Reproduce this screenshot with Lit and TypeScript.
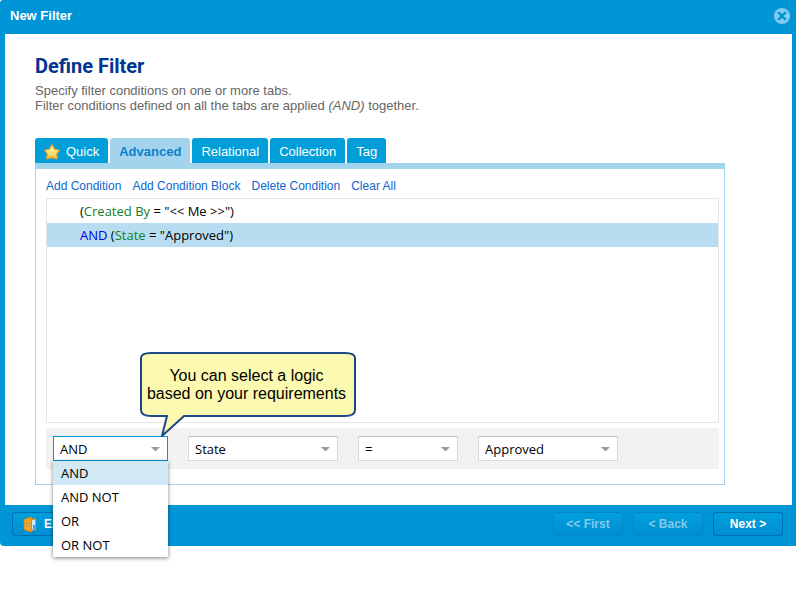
import { LitElement, html, css } from "lit";
import { customElement, property, state } from "lit/decorators.js";
import { classMap } from "lit/directives/class-map.js";

const starIcon = html`<svg class="star" viewBox="0 0 17 17" width="17" height="17" aria-hidden="true">
  <defs>
    <linearGradient id="starFill" x1="0" y1="0" x2="0" y2="1">
      <stop offset="0" stop-color="#fff3a0" />
      <stop offset="0.55" stop-color="#fee27a" />
      <stop offset="1" stop-color="#fbbd2c" />
    </linearGradient>
  </defs>
  <path d="M8 1.6 L10.7 6.2 L15.7 7.2 L12.7 10.8 L13.3 16 L8 14.6 L2.7 16 L3.3 10.8 L0.5 7.2 L5.3 6.2 Z"
    fill="url(#starFill)" stroke="#e79c2c" stroke-width="1.1" stroke-linejoin="round" />
</svg>`;

const doorIcon = html`<svg class="door" viewBox="0 0 14 17" width="14" height="17" aria-hidden="true">
  <path d="M8 2.5H12.2Q13 2.5 13 3.5V13.5Q13 14.5 12.2 14.5H8Z" fill="#e9951a" />
  <path d="M9 4H12V13.5H9Z" fill="#d3e9f7" />
  <path d="M10 9H12V13.5H10Z" fill="#3f9ddb" />
  <path d="M1 3.5 L8.5 0.8 V16.2 L1 13.6 Z" fill="#f0a41f" stroke="#d9860f" stroke-width="0.8" />
  <circle cx="5" cy="8.7" r="1.7" fill="#c9c3b0" stroke="#8b7b50" stroke-width="0.6" />
</svg>`;

const closeIcon = html`<svg viewBox="0 0 16 16" width="16" height="16" aria-hidden="true">
  <circle cx="8" cy="8" r="8" fill="#84cbed" />
  <path d="M4.2 4.2 L11.8 11.8 M11.8 4.2 L4.2 11.8" stroke="#0095d6" stroke-width="2.4" />
</svg>`;

@customElement("filter-select")
export class FilterSelect extends LitElement {
  @property() label = "";
  @property() value = "";
  @property({ type: Array }) options: string[] = [];
  @property({ type: Boolean, reflect: true }) open = false;

  static styles = css`
    :host {
      display: block;
      position: relative;
      font: 13px/24px "Open Sans", sans-serif;
    }
    .field {
      position: relative;
    }
    select {
      display: block;
      width: 100%;
      height: 25px;
      margin: 0;
      padding: 0 24px 0 6px;
      appearance: none;
      border: 1px solid #d9d9d9;
      border-top-color: #c0c0c0;
      border-radius: 0;
      background: #fff;
      color: #000;
      font: inherit;
      outline: none;
    }
    :host([open]) select {
      border-color: #0095d6;
    }
    .arrow {
      position: absolute;
      top: 11px;
      right: 8px;
      pointer-events: none;
    }
    ul {
      position: absolute;
      z-index: 2;
      top: 100%;
      left: 0;
      right: 0;
      margin: 0;
      padding: 0;
      list-style: none;
      background: #fff;
      box-shadow: 0 1px 4px rgba(0, 0, 0, 0.5);
    }
    li {
      padding: 0 8px;
      line-height: 24px;
    }
    li.current {
      background: #d1e9f5;
    }
  `;

  render() {
    return html`
      <div class="field">
        <select aria-label=${this.label}>
          ${this.options.map(
            (o) => html`<option ?selected=${o === this.value}>${o}</option>`
          )}
        </select>
        <svg class="arrow" viewBox="0 0 9 5" width="9" height="5" aria-hidden="true">
          <path d="M0 0H9L5 4H4Z" fill="#999" />
        </svg>
      </div>
      ${this.open
        ? html`<ul role="listbox" aria-label=${this.label}>
            ${this.options.map(
              (o) => html`<li
                role="option"
                aria-selected=${o === this.value}
                class=${classMap({ current: o === this.value })}
              >${o}</li>`
            )}
          </ul>`
        : null}
    `;
  }
}

@customElement("app-root")
export class AppRoot extends LitElement {
  @state() private tab = "Advanced";
  @state() private row = 1;

  private tabs = ["Quick", "Advanced", "Relational", "Collection", "Tag"];
  private actions = ["Add Condition", "Add Condition Block", "Delete Condition", "Clear All"];
  private conditions = [
    { logic: "", field: "Created By", value: '"<< Me >>"' },
    { logic: "AND", field: "State", value: '"Approved"' },
  ];

  static styles = css`
    :host {
      display: block;
      min-height: 100vh;
      background: #fff;
      font: 13px/15px "Liberation Sans", Arial, sans-serif;
      color: #000;
    }
    * {
      box-sizing: border-box;
    }
    button {
      font: inherit;
      margin: 0;
      cursor: pointer;
    }
    .dialog {
      background: #0095d6;
      border-radius: 3px 0 0 4px;
    }
    .title {
      display: flex;
      align-items: flex-start;
      justify-content: space-between;
      height: 34px;
      padding: 8px 6px 0 10px;
      color: #fff;
      font-weight: bold;
    }
    .title h1 {
      margin: 0;
      font: inherit;
    }
    .close {
      display: flex;
      padding: 0;
      border: 0;
      background: none;
    }
    .body {
      margin: 0 4px 0 5px;
      padding: 20px 67px 20px 30px;
      background: #fff;
    }
    h2 {
      margin: 0;
      color: #003591;
      font: 700 20px/24px Roboto, sans-serif;
    }
    .intro {
      margin: 5px 0 25px;
      color: #666;
    }
    .tabs {
      display: flex;
      gap: 2px;
    }
    .tab {
      display: flex;
      align-items: center;
      gap: 5px;
      height: 25px;
      padding: 2px 9px 0;
      border: 0;
      border-radius: 3px 3px 0 0;
      background: #009fda;
      color: #fff;
    }
    .tab.active {
      background: #a2d4ee;
      color: #0b81cb;
      font-weight: bold;
    }
    .panel {
      border: 1px solid #a2d4ee;
      border-top-width: 6px;
      padding: 9px 5px 15px 10px;
    }
    .actions {
      display: flex;
      gap: 11px;
      height: 20px;
      font-size: 12px;
      line-height: 16px;
    }
    .actions a {
      color: #0f66cc;
      text-decoration: none;
    }
    .conditions {
      min-height: 225px;
      border: 1px solid #e6e6e6;
      font: 13px/24px "Open Sans", sans-serif;
    }
    .condition {
      height: 24px;
      padding-left: 33px;
    }
    .condition.selected {
      background: #b8ddf0;
    }
    .logic {
      color: #0000e6;
    }
    .field {
      color: #148024;
    }
    .editor {
      display: flex;
      gap: 20px;
      margin-top: 5px;
      padding: 8px 7px;
      background: #f2f2f2;
    }
    .w-logic {
      width: 115px;
    }
    .w-field {
      width: 150px;
    }
    .w-operator {
      width: 100px;
    }
    .w-value {
      width: 140px;
    }
    .anchor {
      position: relative;
    }
    .callout {
      position: absolute;
      z-index: 3;
      left: 87px;
      bottom: 23px;
      width: 216px;
      height: 86px;
      padding: 15px 3px 0 0;
      text-align: center;
      font-size: 16px;
      line-height: 18px;
    }
    .callout svg {
      position: absolute;
      inset: 0;
    }
    .callout span {
      position: relative;
    }
    .footer {
      display: flex;
      align-items: center;
      gap: 10px;
      padding: 7px 13px 10px 12px;
    }
    .footer button {
      display: flex;
      align-items: center;
      justify-content: center;
      width: 70px;
      height: 24px;
      padding: 0;
      border: 1px solid #0070b5;
      border-radius: 3px;
      background: linear-gradient(#00a0dc, #0095d6 60%, #008ed0);
      color: #fff;
      font-size: 12px;
      font-weight: bold;
    }
    .footer button:disabled {
      border-color: #0085c8;
      color: #80caeb;
      cursor: default;
    }
    .footer .exit {
      justify-content: flex-start;
      gap: 7px;
      margin-right: auto;
      padding-left: 10px;
    }
  `;

  render() {
    return html`
      <section class="dialog" role="dialog" aria-labelledby="title">
        <header class="title">
          <h1 id="title">New Filter</h1>
          <button class="close" aria-label="Close">${closeIcon}</button>
        </header>
        <main class="body">
          <h2>Define Filter</h2>
          <p class="intro">
            Specify filter conditions on one or more tabs.<br />
            Filter conditions defined on all the tabs are applied <em>(AND)</em> together.
          </p>
          <div class="tabs" role="tablist">
            ${this.tabs.map(
              (t) => html`<button
                role="tab"
                aria-selected=${t === this.tab}
                class=${classMap({ tab: true, active: t === this.tab })}
                @click=${() => (this.tab = t)}
              >${t === "Quick" ? starIcon : null}${t}</button>`
            )}
          </div>
          <div class="panel" role="tabpanel">
            <nav class="actions">
              ${this.actions.map((a) => html`<a href="#">${a}</a>`)}
            </nav>
            <div class="conditions">
              ${this.conditions.map(
                (c, i) => html`<div
                  class=${classMap({ condition: true, selected: i === this.row })}
                  @click=${() => (this.row = i)}
                >${c.logic ? html`<span class="logic">${c.logic}</span> ` : null}(<span class="field">${c.field}</span> = ${c.value})</div>`
              )}
            </div>
            <div class="editor">
              <div class="anchor w-logic">
                <filter-select open label="Logic" value="AND"
                  .options=${["AND", "AND NOT", "OR", "OR NOT"]}></filter-select>
                <div class="callout" role="note">
                  <svg viewBox="0 0 216 86" width="216" height="86" aria-hidden="true">
                    <path d="M11 1H205Q215 1 215 6V58Q215 64 205 64H44L22 84L27 64H11Q1 64 1 58V6Q1 1 11 1Z"
                      fill="#fcf9b0" stroke="#1f4886" stroke-width="2" stroke-linejoin="round" />
                  </svg>
                  <span>You can select a logic<br />based on your requirements</span>
                </div>
              </div>
              <filter-select class="w-field" label="Field" value="State" .options=${["State", "Created By"]}></filter-select>
              <filter-select class="w-operator" label="Operator" value="=" .options=${["="]}></filter-select>
              <filter-select class="w-value" label="Value" value="Approved" .options=${["Approved"]}></filter-select>
            </div>
          </div>
        </main>
        <footer class="footer">
          <button class="exit">${doorIcon}Exit</button>
          <button disabled>&lt;&lt; First</button>
          <button disabled>&lt; Back</button>
          <button>Next &gt;</button>
        </footer>
      </section>
    `;
  }
}
